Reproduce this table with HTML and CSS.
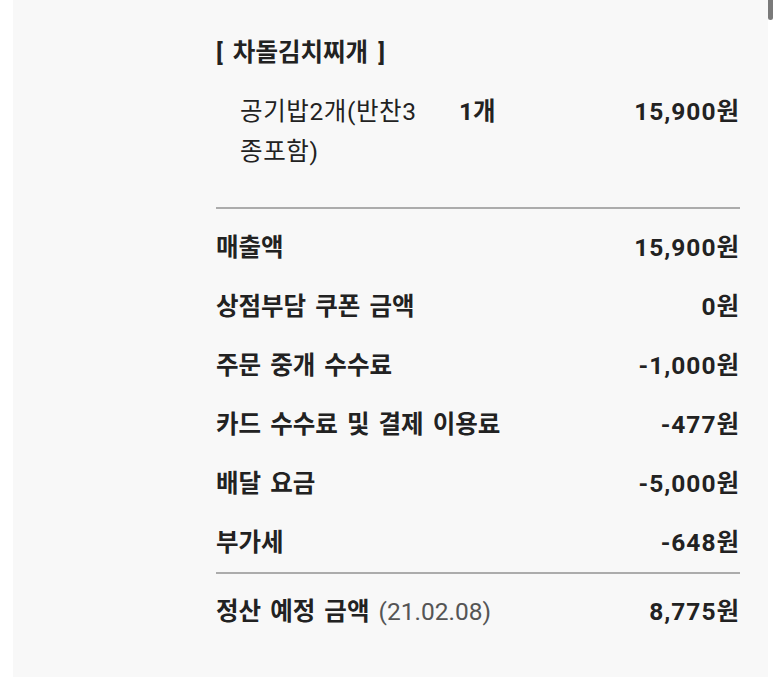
FILE: index.html
```html
<!DOCTYPE html>
<html lang="ko">
<head>
<meta charset="utf-8">
<link rel="stylesheet" href="styles.css">
</head>
<body>
<div class="panel">
  <div class="content">
    <div class="menu-title">[ 차돌김치찌개 ]</div>
    <div class="item">
      <div class="item-name">공기밥2개(반찬3종포함)</div>
      <div class="item-qty">1개</div>
      <div class="item-price">15,900원</div>
    </div>
    <div class="divider first"></div>
    <div class="rows">
      <div class="row"><span class="label">매출액</span><span class="value">15,900원</span></div>
      <div class="row"><span class="label">상점부담 쿠폰 금액</span><span class="value">0원</span></div>
      <div class="row"><span class="label">주문 중개 수수료</span><span class="value">-1,000원</span></div>
      <div class="row"><span class="label">카드 수수료 및 결제 이용료</span><span class="value">-477원</span></div>
      <div class="row"><span class="label">배달 요금</span><span class="value">-5,000원</span></div>
      <div class="row"><span class="label">부가세</span><span class="value">-648원</span></div>
    </div>
    <div class="divider second"></div>
    <div class="row total"><span class="label">정산 예정 금액 <span class="date">(21.02.08)</span></span><span class="value">8,775원</span></div>
  </div>
  <div class="scrollbar"></div>
</div>
</body>
</html>
```
FILE: styles.css
```css
html, body {
  margin: 0;
  padding: 0;
  background: #ffffff;
}
body {
  width: 780px;
  height: 691px;
  overflow: hidden;
  font-family: Roboto, "Noto Sans CJK KR", sans-serif;
  color: #222222;
}
.panel {
  position: relative;
  margin-left: 13px;
  width: 755px;
  height: 677px;
  background: #f8f8f8;
  box-sizing: border-box;
  padding: 33px 28px 0 203px;
}
.content {
  display: flex;
  flex-direction: column;
}
.menu-title {
  font-size: 24.5px;
  font-weight: 700;
  line-height: 40px;
  word-spacing: 4px;
}
.item {
  display: flex;
  align-items: flex-start;
  margin-top: 19px;
  padding-left: 24px;
  font-size: 24.5px;
  line-height: 40px;
}
.item-name {
  width: 195px;
  font-weight: 400;
  letter-spacing: 0.6px;
}
.item-qty {
  margin-left: 24px;
  font-weight: 700;
}
.item-price {
  margin-left: auto;
  font-weight: 700;
  letter-spacing: 1px;
}
.divider {
  height: 2px;
  background: #acacac;
}
.divider.first {
  margin-top: 35px;
}
.divider.second {
  margin-top: 2px;
}
.rows {
  padding-top: 7px;
  display: flex;
  flex-direction: column;
}
.row {
  display: flex;
  justify-content: space-between;
  align-items: center;
  height: 59px;
  font-size: 24.5px;
}
.label {
  font-weight: 600;
  word-spacing: 3px;
}
.value {
  font-weight: 700;
  letter-spacing: 1px;
}
.row.total {
  margin-top: 6px;
}
.date {
  font-weight: 400;
  color: #555555;
  word-spacing: 0;
}
.scrollbar {
  position: absolute;
  right: -5px;
  top: 0;
  width: 5px;
  height: 20px;
  border-radius: 0 0 3px 3px;
  background: #7a7a7a;
}
```
